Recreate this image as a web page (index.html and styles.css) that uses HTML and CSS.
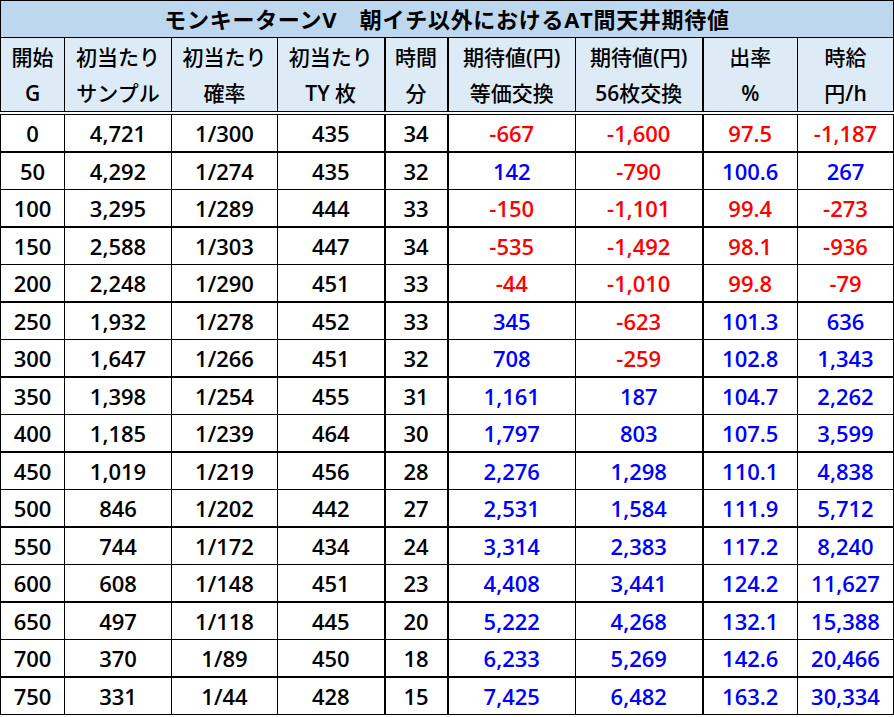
FILE: index.html
```html
<!DOCTYPE html>
<html lang="ja">
<head>
<meta charset="utf-8">
<link rel="stylesheet" href="styles.css">
</head>
<body>
<table class="sheet">
  <colgroup>
    <col class="c1"><col class="c2"><col class="c3"><col class="c4"><col class="c5"><col class="c6"><col class="c7"><col class="c8"><col class="c9">
  </colgroup>
  <thead>
    <tr class="title-row"><th colspan="9" class="title">モンキーターンV　朝イチ以外におけるAT間天井期待値</th></tr>
    <tr class="head-row">
      <th>開始<br><span class="lat">G</span></th>
      <th>初当たり<br>サンプル</th>
      <th>初当たり<br>確率</th>
      <th>初当たり<br><span class="lat">TY</span> 枚</th>
      <th class="gr">時間<br>分</th>
      <th class="gr">期待値<span class="lat">(</span>円<span class="lat">)</span><br>等価交換</th>
      <th>期待値<span class="lat">(</span>円<span class="lat">)</span><br><span class="lat">56</span>枚交換</th>
      <th class="gr">出率<br><span class="lat">%</span></th>
      <th>時給<br>円<span class="lat">/h</span></th>
    </tr>
  </thead>
  <tbody>
    <tr class="grp"><td>0</td><td>4,721</td><td>1/300</td><td>435</td><td class="gr">34</td><td class="gr neg">-667</td><td class="neg">-1,600</td><td class="gr neg">97.5</td><td class="neg">-1,187</td></tr>
    <tr><td>50</td><td>4,292</td><td>1/274</td><td>435</td><td class="gr">32</td><td class="gr pos">142</td><td class="neg">-790</td><td class="gr pos">100.6</td><td class="pos">267</td></tr>
    <tr class="grp"><td>100</td><td>3,295</td><td>1/289</td><td>444</td><td class="gr">33</td><td class="gr neg">-150</td><td class="neg">-1,101</td><td class="gr neg">99.4</td><td class="neg">-273</td></tr>
    <tr><td>150</td><td>2,588</td><td>1/303</td><td>447</td><td class="gr">34</td><td class="gr neg">-535</td><td class="neg">-1,492</td><td class="gr neg">98.1</td><td class="neg">-936</td></tr>
    <tr class="grp"><td>200</td><td>2,248</td><td>1/290</td><td>451</td><td class="gr">33</td><td class="gr neg">-44</td><td class="neg">-1,010</td><td class="gr neg">99.8</td><td class="neg">-79</td></tr>
    <tr><td>250</td><td>1,932</td><td>1/278</td><td>452</td><td class="gr">33</td><td class="gr pos">345</td><td class="neg">-623</td><td class="gr pos">101.3</td><td class="pos">636</td></tr>
    <tr class="grp"><td>300</td><td>1,647</td><td>1/266</td><td>451</td><td class="gr">32</td><td class="gr pos">708</td><td class="neg">-259</td><td class="gr pos">102.8</td><td class="pos">1,343</td></tr>
    <tr><td>350</td><td>1,398</td><td>1/254</td><td>455</td><td class="gr">31</td><td class="gr pos">1,161</td><td class="pos">187</td><td class="gr pos">104.7</td><td class="pos">2,262</td></tr>
    <tr class="grp"><td>400</td><td>1,185</td><td>1/239</td><td>464</td><td class="gr">30</td><td class="gr pos">1,797</td><td class="pos">803</td><td class="gr pos">107.5</td><td class="pos">3,599</td></tr>
    <tr><td>450</td><td>1,019</td><td>1/219</td><td>456</td><td class="gr">28</td><td class="gr pos">2,276</td><td class="pos">1,298</td><td class="gr pos">110.1</td><td class="pos">4,838</td></tr>
    <tr class="grp"><td>500</td><td>846</td><td>1/202</td><td>442</td><td class="gr">27</td><td class="gr pos">2,531</td><td class="pos">1,584</td><td class="gr pos">111.9</td><td class="pos">5,712</td></tr>
    <tr><td>550</td><td>744</td><td>1/172</td><td>434</td><td class="gr">24</td><td class="gr pos">3,314</td><td class="pos">2,383</td><td class="gr pos">117.2</td><td class="pos">8,240</td></tr>
    <tr class="grp"><td>600</td><td>608</td><td>1/148</td><td>451</td><td class="gr">23</td><td class="gr pos">4,408</td><td class="pos">3,441</td><td class="gr pos">124.2</td><td class="pos">11,627</td></tr>
    <tr><td>650</td><td>497</td><td>1/118</td><td>445</td><td class="gr">20</td><td class="gr pos">5,222</td><td class="pos">4,268</td><td class="gr pos">132.1</td><td class="pos">15,388</td></tr>
    <tr class="grp"><td>700</td><td>370</td><td>1/89</td><td>450</td><td class="gr">18</td><td class="gr pos">6,233</td><td class="pos">5,269</td><td class="gr pos">142.6</td><td class="pos">20,466</td></tr>
    <tr><td>750</td><td>331</td><td>1/44</td><td>428</td><td class="gr">15</td><td class="gr pos">7,425</td><td class="pos">6,482</td><td class="gr pos">163.2</td><td class="pos">30,334</td></tr>
  </tbody>
</table>
</body>
</html>
```

FILE: styles.css
```css
html, body {
  margin: 0;
  padding: 0;
  background: #ffffff;
}

.sheet {
  border-collapse: collapse;
  table-layout: fixed;
  width: 894px;
  font-family: "Open Sans", "Noto Sans CJK JP", sans-serif;
  color: #000000;
}

.c1 { width: 64px; }
.c2 { width: 107px; }
.c3 { width: 106px; }
.c4 { width: 107px; }
.c5 { width: 63px; }
.c6 { width: 128px; }
.c7 { width: 127px; }
.c8 { width: 95px; }
.c9 { width: 96px; }

.sheet th,
.sheet td {
  border: 1px solid #000000;
  padding: 0;
  text-align: center;
  white-space: nowrap;
  overflow: hidden;
}

.title-row .title {
  height: 36px;
  background: #bdd7ee;
  font-size: 22px;
  font-weight: 700;
  line-height: 36px;
  letter-spacing: 0.7px;
}

.head-row th {
  background: #ddebf7;
  font-size: 21px;
  font-weight: 500;
  line-height: 36px;
  height: 71px;
  padding-top: 1px;
  border-bottom: 4px double #000000;
}

.head-row .lat {
  font-weight: 600;
}

.sheet td {
  height: 36px;
  font-size: 22px;
  font-weight: 600;
  line-height: 35px;
}

.sheet th.gr,
.sheet td.gr {
  border-left-width: 2px;
}

.sheet tr.grp td {
  border-bottom-width: 2px;
}

.neg { color: #ff0000; }
.pos { color: #0000ff; }
```
